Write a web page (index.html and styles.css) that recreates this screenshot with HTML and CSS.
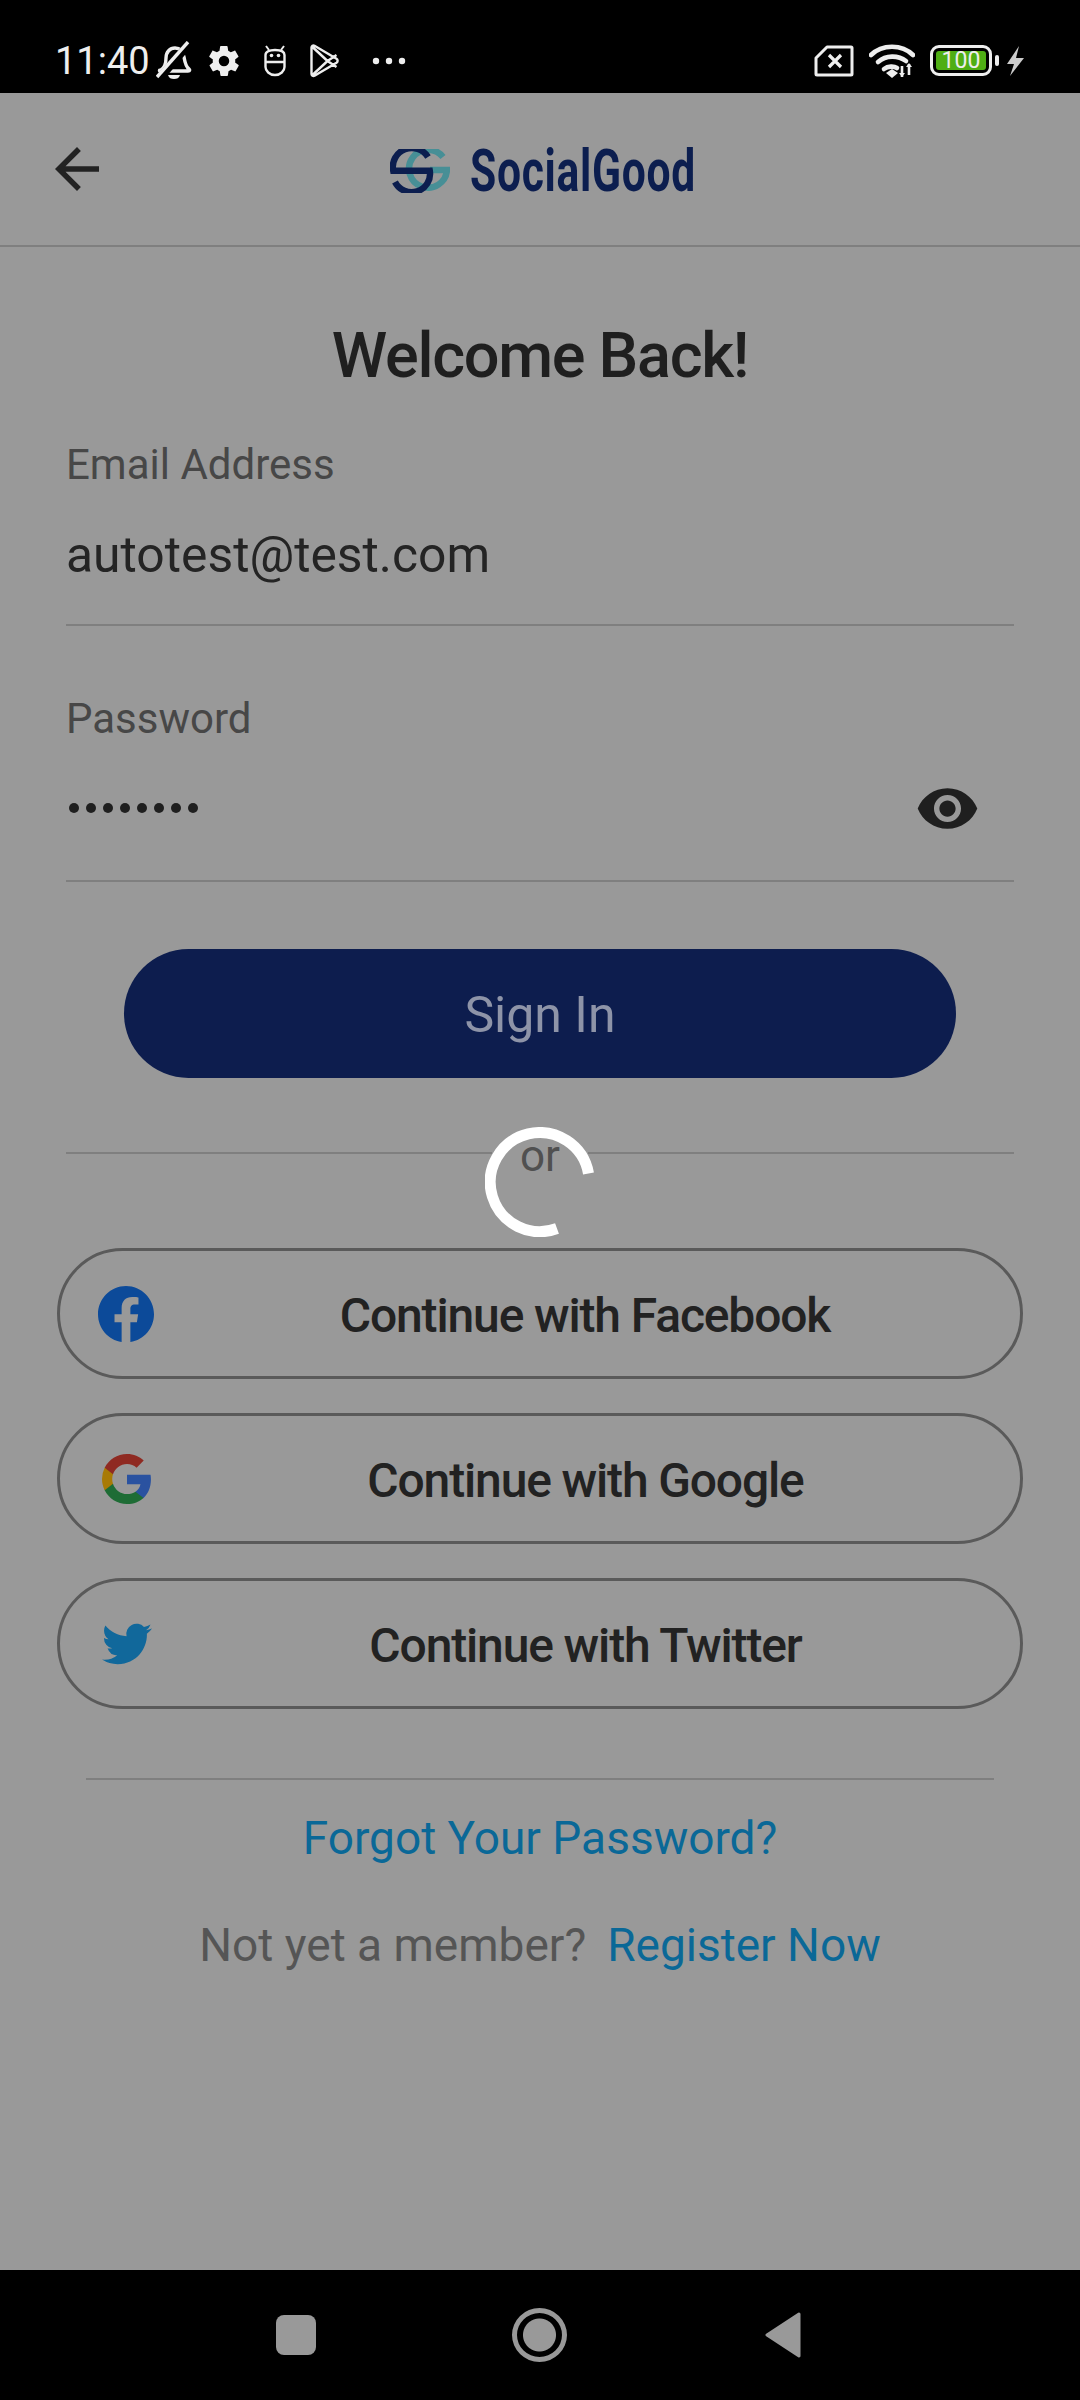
FILE: index.html
```html
<!DOCTYPE html>
<html lang="en">
<head>
<meta charset="utf-8">
<title>SocialGood Sign In</title>
<link rel="stylesheet" href="styles.css">
</head>
<body>
<div class="phone">
  <header class="status">
    <span class="time">11:40</span>
    <svg class="st bell" viewBox="0 0 36 40"><path d="M5 29c3-2 5-5 5-12 0-6 4-10 9-10s8 3 9 9c1 6 2 10 5 12 1 1 1 2-1 2H5c-2 0-2-1 0-1z" fill="none" stroke="#eee" stroke-width="3.400"/><path d="M3 38 33 3" stroke="#000" stroke-width="8"/><path d="M1 36 32 1" stroke="#eee" stroke-width="3.400"/><path d="M12 34h12c-1 3-3 4-6 4s-5-1-6-4z" fill="#eee"/></svg>
    <svg class="st gear" viewBox="0 0 24 24"><path fill="#eee" fill-rule="evenodd" d="M19.4 13c.1-.3.1-.7.1-1s0-.7-.1-1l2.100-1.600c.2-.2.2-.4.1-.6l-2-3.500c-.1-.2-.4-.3-.6-.2l-2.500 1c-.5-.4-1.100-.7-1.700-1l-.4-2.600c0-.3-.2-.5-.5-.5h-4c-.3 0-.5.2-.5.5l-.4 2.600c-.6.3-1.200.6-1.700 1l-2.500-1c-.2-.1-.5 0-.6.2l-2 3.500c-.1.2-.1.4.1.6L4.600 11c-.1.3-.1.7-.1 1s0 .7.1 1l-2.100 1.600c-.2.2-.2.4-.1.6l2 3.500c.1.2.4.3.6.2l2.500-1c.5.4 1.100.7 1.700 1l.4 2.600c0 .3.2.5.5.5h4c.3 0 .5-.2.5-.5l.4-2.600c.6-.3 1.200-.6 1.700-1l2.500 1c.2.1.5 0 .6-.2l2-3.500c.1-.2.1-.4-.1-.6L19.400 13zM12 15.500a3.500 3.500 0 1 1 0-7 3.500 3.500 0 0 1 0 7z"/></svg>
    <svg class="st robot" viewBox="0 0 24 32"><path d="M2.500 18V10C2.500 7 6 5 12 5s9.500 2 9.500 5v12c0 4-4 8-9.500 8S2.500 26 2.500 22V17h19" fill="none" stroke="#eee" stroke-width="2.400"/><path d="M3 1l3 4M21 1l-3 4" stroke="#eee" stroke-width="2"/><circle cx="8.500" cy="10.500" r="1.800" fill="#eee"/><circle cx="15.500" cy="10.500" r="1.800" fill="#eee"/></svg>
    <svg class="st play" viewBox="0 0 30 34"><path d="M2 3.500c0-1.500 1.500-2.500 3-1.700l22 13c1.500 1 1.500 3 0 4l-22 13c-1.500.8-3-.2-3-1.700zM3 3l15 14L3 31M18 17l9-6M18 17l9 6" fill="none" stroke="#eee" stroke-width="2.400" stroke-linejoin="round"/></svg>
    <svg class="st dots" viewBox="0 0 34 8"><circle cx="4" cy="4" r="3.200" fill="#eee"/><circle cx="17" cy="4" r="3.200" fill="#eee"/><circle cx="30" cy="4" r="3.200" fill="#eee"/></svg>
    <span class="status-gap"></span>
    <svg class="st sim" viewBox="0 0 40 32"><path d="M13 2h24c.600 0 1 .4 1 1v26c0 .6-.4 1-1 1H3c-.6 0-1-.4-1-1V13z" fill="none" stroke="#eee" stroke-width="3" stroke-linejoin="round"/><path d="M15 10l12 12M27 10 15 22" stroke="#eee" stroke-width="3.200"/></svg>
    <svg class="st wifi" viewBox="0 0 46 34"><g fill="none" stroke="#eee" stroke-width="4.600" stroke-linecap="round"><path d="M2 11C13 0 33 0 44 11"/><path d="M9 18c8-7 20-7 28-1"/><path d="M15 25c4-3 10-3 13-1"/></g><path d="M17 29l6-4 6 4-6 5z" fill="#eee"/><path d="M33 22v11M40 20v11" stroke="#eee" stroke-width="2.600"/><path d="M30 29l3 4 3-4zM37 23l3-4 3 4z" fill="#eee"/></svg>
    <span class="battery"><span class="battery-fill">100</span></span>
    <span class="nub"></span>
    <svg class="st bolt" viewBox="0 0 20 30"><path d="M14 0 2 18h7L5 30l14-18h-8z" fill="#ccc"/></svg>
  </header>

  <nav class="appbar">
    <svg class="back" viewBox="0 0 24 24"><path fill="#222" d="M20 11H7.830l5.590-5.590L12 4l-8 8 8 8 1.410-1.410L7.830 13H20v-2z"/></svg>
    <div class="logo">
      <svg class="logo-mark" viewBox="0 0 60 44">
        <g fill="none" stroke-width="6.400">
          <path stroke="#478f96" d="M53 8A19 19 0 1 0 57 21H40"/>
          <path stroke="#0c1e4f" d="M38 8A19 19 0 0 0 3.200 21.700H39.800A18.500 18.500 0 0 1 5 33"/>
        </g>
      </svg>
      <span class="logo-text">SocialGood</span>
    </div>
  </nav>

  <main class="main">
    <h1 class="title">Welcome Back!</h1>
    <section class="field field-email">
      <label class="label">Email Address</label>
      <div class="value">autotest@test.com</div>
    </section>
    <section class="field field-pass">
      <label class="label">Password</label>
      <div class="value pass">
        <span class="dotrow"><i></i><i></i><i></i><i></i><i></i><i></i><i></i><i></i></span>
        <svg class="eye" viewBox="0 0 24 24"><path fill="#1f1f1f" d="M12 4.500C7 4.500 2.730 7.610 1 12c1.730 4.390 6 7.500 11 7.500s9.270-3.110 11-7.500c-1.730-4.390-6-7.500-11-7.500zM12 17c-2.760 0-5-2.240-5-5s2.240-5 5-5 5 2.240 5 5-2.240 5-5 5zm0-8c-1.660 0-3 1.340-3 3s1.340 3 3 3 3-1.340 3-3-1.340-3-3-3z"/></svg>
      </div>
    </section>
    <button class="signin">Sign In</button>
    <div class="or-row"><span class="or">or</span></div>
    <div class="socials">
      <div class="social">
        <svg class="ico" viewBox="0 0 24 24"><path fill="#0c4a99" d="M24 12.073C24 5.405 18.627 0 12 0S0 5.405 0 12.073c0 6.026 4.388 11.020 10.125 11.927v-8.437H7.078v-3.490h3.047V9.413c0-3.026 1.792-4.697 4.533-4.697 1.312 0 2.686.236 2.686.236v2.971h-1.513c-1.491 0-1.956.930-1.956 1.886v2.264h3.328l-.532 3.490h-2.796V24C19.612 23.093 24 18.099 24 12.073z"/></svg>
        <span class="social-text">Continue with Facebook</span>
      </div>
      <div class="social">
        <svg class="ico g" viewBox="0 0 24 24"><path fill="#2a52a0" d="M23.490 12.270c0-.790-.070-1.540-.190-2.270H12v4.510h6.470c-.290 1.480-1.140 2.730-2.400 3.580v3h3.860c2.260-2.090 3.560-5.170 3.560-8.820z"/><path fill="#1e6c35" d="M12 24c3.240 0 5.950-1.080 7.930-2.910l-3.860-3c-1.080.72-2.450 1.160-4.070 1.160-3.130 0-5.780-2.110-6.730-4.960H1.290v3.090C3.260 21.300 7.310 24 12 24z"/><path fill="#a87a05" d="M5.270 14.290c-.250-.720-.380-1.490-.380-2.290s.140-1.570.380-2.290V6.620H1.290A11.900 11.900 0 0 0 0 12c0 1.940.470 3.770 1.290 5.380l3.980-3.090z"/><path fill="#8f2a22" d="M12 4.750c1.770 0 3.350.610 4.600 1.800l3.420-3.420C17.950 1.190 15.240 0 12 0 7.310 0 3.260 2.700 1.290 6.620l3.980 3.090C6.220 6.860 8.870 4.750 12 4.750z"/></svg>
        <span class="social-text">Continue with Google</span>
      </div>
      <div class="social">
        <svg class="ico t" viewBox="0 0 24 24"><path fill="#11689b" d="M23.950 4.570a10 10 0 0 1-2.820.770 4.960 4.960 0 0 0 2.160-2.720c-.950.550-2 .960-3.130 1.190a4.920 4.920 0 0 0-8.380 4.480C7.690 8.090 4.070 6.120 1.640 3.160a4.820 4.820 0 0 0-.660 2.480c0 1.710.870 3.210 2.190 4.100a4.900 4.900 0 0 1-2.230-.620v.060a4.920 4.920 0 0 0 3.950 4.830 5 5 0 0 1-2.210.080 4.940 4.940 0 0 0 4.600 3.420A9.870 9.870 0 0 1 1 19.540a10.300 10.300 0 0 1-1-.060 13.900 13.900 0 0 0 7.550 2.210c9.050 0 14-7.500 14-13.980 0-.210 0-.420-.020-.630a9.930 9.930 0 0 0 2.460-2.550z"/></svg>
        <span class="social-text">Continue with Twitter</span>
      </div>
    </div>
    <div class="links">
      <a class="link">Forgot Your Password?</a>
      <p class="member">Not yet a member?<a class="link reg">Register Now</a></p>
    </div>
  </main>

  <footer class="navbar">
    <span class="nav-square"></span>
    <span class="nav-home"></span>
    <svg class="nav-back" viewBox="0 0 36 46"><path d="M34 2 2 23l32 21z" fill="#999" stroke="#999" stroke-width="3" stroke-linejoin="round"/></svg>
  </footer>

  <svg class="spinner" viewBox="0 0 110 110"><path d="M103.500 46.500A49.500 49.500 0 1 0 72 101.500" fill="none" stroke="#fff" stroke-width="11"/></svg>
</div>
</body>
</html>
```

FILE: styles.css
```css
* { box-sizing: border-box; }
html, body { margin: 0; padding: 0; }
body { font-family: Roboto, "Noto Sans", sans-serif; background: #999; }
.phone { position: relative; width: 1080px; height: 2400px; display: flex; flex-direction: column; background: #999; overflow: hidden; }

.status { height: 93px; flex: none; background: #000; display: flex; align-items: center; padding: 28px 55px 0 55px; color: #eee; }
.time { font-size: 38px; line-height: 44px; width: 92px; margin-top: 1px; }
.st { display: block; flex: none; }
.bell { width: 36px; height: 40px; margin-left: 9px; }
.gear { width: 36px; height: 36px; margin-left: 14px; }
.robot { width: 24px; height: 32px; margin-left: 21px; }
.play { width: 31px; height: 34px; margin-left: 22px; }
.dots { width: 34px; height: 8px; margin-left: 32px; }
.status-gap { flex: 1; }
.sim { width: 40px; height: 32px; }
.wifi { width: 46px; height: 34px; margin-left: 15px; }
.battery { width: 62px; height: 31px; margin-left: 15px; border: 3px solid #eee; border-radius: 9px; padding: 3px; display: flex; }
.battery-fill { flex: 1; background: #4fae14; border-radius: 3px; color: #eee; font-size: 23px; line-height: 19px; text-align: center; }
.nub { width: 4px; height: 11px; margin-left: 3px; background: #eee; border-radius: 2px; }
.bolt { width: 20px; height: 30px; margin-left: 6px; }

.appbar { height: 154px; flex: none; border-bottom: 2px solid #7f7f7f; display: grid; grid-template-columns: 1fr auto 1fr; align-items: center; padding-left: 44px; }
.back { width: 66px; height: 66px; display: block; }
.logo { width: 306px; height: 44px; display: flex; align-items: flex-start; margin: 3px 0 0 -39px; }
.logo-mark { width: 60px; height: 44px; display: block; flex: none; }
.logo-text { display: block; flex: none; width: 320px; margin-left: 20px; margin-right: -96px; font-weight: 700; font-size: 60px; line-height: 44px; letter-spacing: 1px; color: #0c1e4f; transform: scaleX(.71); transform-origin: left center; }

.main { flex: 1; display: flex; flex-direction: column; padding: 0 66px; min-height: 0; }
.title { margin: 73px 0 0; font-size: 63px; line-height: 72px; letter-spacing: -1.300px; font-weight: 500; color: #1f1f1f; text-align: center; }
.field { border-bottom: 2px solid #7f7f7f; flex: none; }
.field-email { height: 234px; padding-top: 49px; }
.field-pass { height: 256px; padding-top: 69px; }
.label { display: block; font-size: 42px; line-height: 48px; color: #474747; }
.value { font-size: 49.800px; line-height: 56px; color: #242424; margin-top: 38px; }
.pass { display: flex; align-items: center; justify-content: space-between; height: 56px; padding: 0 34px 0 3px; margin-top: 37px; }
.dotrow { display: flex; gap: 7px; }
.dotrow i { width: 10px; height: 10px; border-radius: 50%; background: #1f1f1f; display: block; }
.eye { width: 65px; height: 65px; display: block; flex: none; }

.signin { width: 832px; height: 129px; margin: 67px 0 0 58px; flex: none; border: 0; border-radius: 65px; background: #0d1d4e; color: #8e94a8; font-family: Roboto, sans-serif; font-size: 50px; padding: 2px 0 0; }
.or-row { height: 2px; margin-top: 74px; background: #7f7f7f; display: flex; justify-content: center; flex: none; }
.or { height: 44px; line-height: 44px; margin-top: -18px; background: #999; color: #505050; font-size: 44px; align-self: flex-start; width: 96px; text-align: center; }

.socials { display: flex; flex-direction: column; gap: 34px; margin: 94px -9px 0; }
.social { height: 131px; border: 3px solid #5a5a5a; border-radius: 66px; display: flex; align-items: center; padding-left: 38px; }
.ico { width: 56px; height: 56px; flex: none; display: block; }
.g { width: 50px; height: 50px; margin: 0 3px 0 4px; }
.t { width: 50px; height: 50px; margin: 0 3px 0 4px; }
.social-text { flex: 1; text-align: center; font-size: 48px; letter-spacing: -1.150px; font-weight: 490; color: #222; padding: 4px 4px 0 0; }

.links { margin: 69px 20px 0; border-top: 2px solid #7f7f7f; padding-top: 30px; display: flex; flex-direction: column; align-items: center; font-size: 46px; }
.link { color: #0a6897; line-height: 56px; }
.member { margin: 51px 0 0; color: #555; line-height: 56px; display: flex; }
.reg { margin-left: 21px; }

.navbar { height: 130px; flex: none; background: #000; position: relative; display: flex; align-items: center; padding-left: 276px; }
.nav-square { width: 40px; height: 40px; background: #999; border-radius: 8px; display: block; }
.nav-home { width: 55px; height: 54px; margin-left: 196px; border: 5px solid #999; border-radius: 50%; display: flex; background: radial-gradient(circle, #999 0 16px, #000 17px); }
.nav-back { width: 36px; height: 46px; margin-left: 198px; display: block; }

.spinner { position: absolute; left: 485px; top: 1127px; width: 110px; height: 110px; }
```
